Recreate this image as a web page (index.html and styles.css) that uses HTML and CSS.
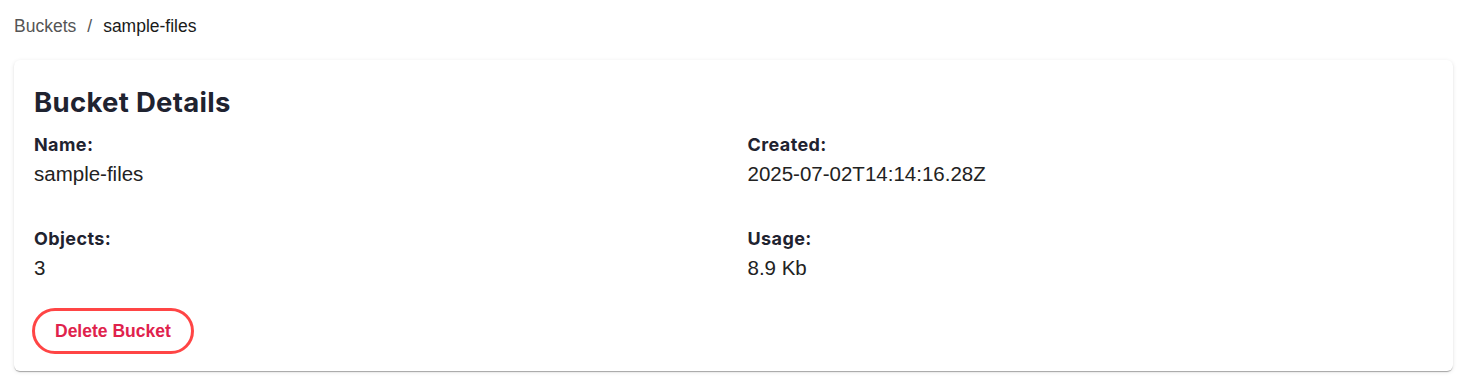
FILE: index.html
```html
<!DOCTYPE html>
<html>
<head>
    <title>Bucket Details</title>
    <link rel="stylesheet" href="styles.css">
</head>
<body>
    <nav class="crumbs">
        <a href="#" class="crumb-link">Buckets</a>
        <span class="crumb-sep">/</span>
        <span class="crumb-current">sample-files</span>
    </nav>

    <div class="card">
        <h2>Bucket Details</h2>
        <div class="details">
            <div class="field">
                <div class="label">Name:</div>
                <div class="value">sample-files</div>
            </div>
            <div class="field">
                <div class="label">Created:</div>
                <div class="value">2025-07-02T14:14:16.28Z</div>
            </div>
            <div class="field">
                <div class="label">Objects:</div>
                <div class="value">3</div>
            </div>
            <div class="field">
                <div class="label">Usage:</div>
                <div class="value">8.9 Kb</div>
            </div>
        </div>
        <button class="btn-delete">Delete Bucket</button>
    </div>
</body>
</html>
```

FILE: styles.css
```css
body { margin: 0; padding: 14px 16px 16px 14px; background: #fff; font-family: 'Liberation Sans', Arial, sans-serif; color: #222; }
.crumbs { display: flex; align-items: center; gap: 11px; font-size: 17.5px; line-height: 24px; }
.crumb-link { color: #555; text-decoration: none; }
.crumb-sep { color: #555; }
.crumb-current { color: #1a1a1a; }
.card {
    margin-top: 22px;
    background: #fff;
    border-radius: 6px;
    padding: 20px 20px 17px;
    box-shadow: 0 2px 1px -1px rgba(0,0,0,0.2), 0 1px 1px 0 rgba(0,0,0,0.14), 0 1px 4px 0 rgba(0,0,0,0.1);
}
h2 {
    margin: 0 0 10px;
    font-family: Inter, 'Noto Sans', sans-serif;
    font-weight: 700;
    font-size: 27.5px;
    line-height: 44px;
    color: #1f2330;
    letter-spacing: 0.3px;
}
.details {
    display: grid;
    grid-template-columns: 1fr 1fr;
    column-gap: 28px;
    row-gap: 39px;
}
.label {
    font-family: Inter, 'Noto Sans', sans-serif;
    font-weight: 700;
    font-size: 18px;
    line-height: 22px;
    color: #1f2330;
    letter-spacing: 0.4px;
}
.value { margin-top: 3px; font-size: 20.5px; line-height: 30px; color: #222; }
.btn-delete {
    margin: 25px 0 0 -2px;
    height: 46px;
    padding: 0 20px;
    background: #fff;
    border: 3px solid #ff4545;
    border-radius: 23px;
    color: #e0224c;
    font-family: 'Liberation Sans', Arial, sans-serif;
    font-weight: 700;
    font-size: 17.5px;
    cursor: pointer;
}
```
